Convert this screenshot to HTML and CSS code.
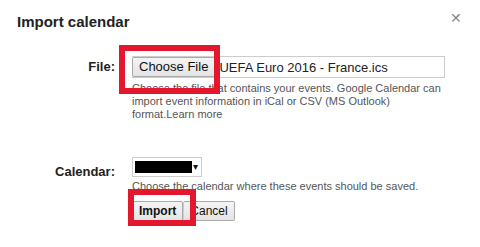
FILE: index.html
```html
<!DOCTYPE html>
<html lang="en">
<head>
  <meta charset="utf-8">
  <title>Import calendar</title>
  <link rel="stylesheet" href="styles.css">
</head>
<body>
  <div class="dialog">
    <!-- Header -->
    <div class="dialog-head">
      <h1 class="dialog-title">Import calendar</h1>
      <span class="close">&#x2715;</span>
    </div>

    <div class="form">
      <!-- File row -->
      <div class="row row-file">
        <div class="label">File:</div>
        <div class="field">
          <div class="file-input">
            <span class="btn btn-choose">Choose File</span>
            <span class="file-name">UEFA Euro 2016 - France.ics</span>
          </div>
          <p class="hint">Choose the file that contains your events. Google Calendar can import event information in iCal or CSV (MS Outlook) format.<a class="learn">Learn more</a></p>
          <div class="mark mark-choose"></div>
        </div>
      </div>

      <!-- Calendar row -->
      <div class="row row-cal">
        <div class="label">Calendar:</div>
        <div class="field">
          <div class="select">
            <span class="select-value"></span>
            <span class="select-arrow">&#x25BE;</span>
          </div>
          <p class="hint">Choose the calendar where these events should be saved.</p>
          <div class="buttons">
            <span class="btn btn-import">Import</span>
            <span class="btn btn-cancel">Cancel</span>
          </div>
          <div class="mark mark-import"></div>
        </div>
      </div>
    </div>
  </div>
</body>
</html>
```

FILE: styles.css
```css
/* Base */
body {
  margin: 0;
  background: #fff;
  font-family: "Liberation Sans", Arial, sans-serif;
  color: #222;
  overflow: hidden;
}

.dialog {
  width: 480px;
  height: 247px;
  padding: 12px 17px 0 17px;
  box-sizing: border-box;
}

/* Header */
.dialog-head {
  display: flex;
  justify-content: space-between;
  align-items: flex-start;
}

.dialog-title {
  margin: 0;
  font-size: 15px;
  font-weight: bold;
  line-height: 20px;
  color: #222;
}

.close {
  font-size: 14px;
  line-height: 14px;
  color: #888;
  margin-top: -1px;
  margin-right: 1px;
}

/* Form rows */
.form {
  margin-top: 25px;
}

.row {
  display: flex;
}

.label {
  width: 98px;
  text-align: right;
  font-size: 13px;
  font-weight: bold;
  color: #222;
  flex: none;
}

.row-file .label {
  padding-top: 2px;
}

.field {
  position: relative;
  margin-left: 17px;
  flex: 1;
}

/* File input */
.file-input {
  display: flex;
  align-items: center;
  width: 312px;
  height: 20px;
  border: 1px solid #ccc;
  border-left: none;
  margin-top: -1px;
  font-size: 13px;
}

.btn {
  display: inline-block;
  font-size: 13px;
  line-height: 16px;
  padding: 1px 6px;
  border: 1px solid #aaa;
  border-radius: 2px;
  background: linear-gradient(#f4f4f4, #e4e4e4);
  color: #111;
}

.btn-choose {
  margin-right: 4px;
}

.file-name {
  color: #222;
}

.hint {
  margin: 0;
  width: 320px;
  font-size: 11px;
  line-height: 13px;
  color: #555;
}

.row-file .hint {
  margin-top: 4px;
}

.learn {
  color: #555;
}

/* Calendar select */
.row-cal {
  margin-top: 36px;
}

.row-cal .label {
  padding-top: 7px;
}

.select {
  display: flex;
  align-items: center;
  width: 66px;
  height: 16px;
  border: 1px solid #ccc;
  padding: 1px;
}

.select-value {
  width: 57px;
  height: 12px;
  background: #000;
  margin-left: 1px;
}

.select-arrow {
  font-size: 10px;
  line-height: 10px;
  color: #111;
  margin-left: 1px;
}

.row-cal .hint {
  margin-top: 3px;
}

.buttons {
  display: flex;
  margin-top: 8px;
  font-size: 12px;
}

.buttons .btn {
  font-size: 12px;
  line-height: 16px;
  padding: 1px 6px;
}

.btn-import {
  font-weight: bold;
}

.btn-cancel {
  border-left-color: #ccc;
  padding-left: 3px;
}

/* Red annotation boxes */
.mark {
  position: absolute;
  border: 6px solid #e3172e;
  box-sizing: border-box;
}

.mark-choose {
  left: -13px;
  top: -12px;
  width: 101px;
  height: 49px;
}

.mark-import {
  left: -4px;
  top: 32px;
  width: 68px;
  height: 37px;
}
```
